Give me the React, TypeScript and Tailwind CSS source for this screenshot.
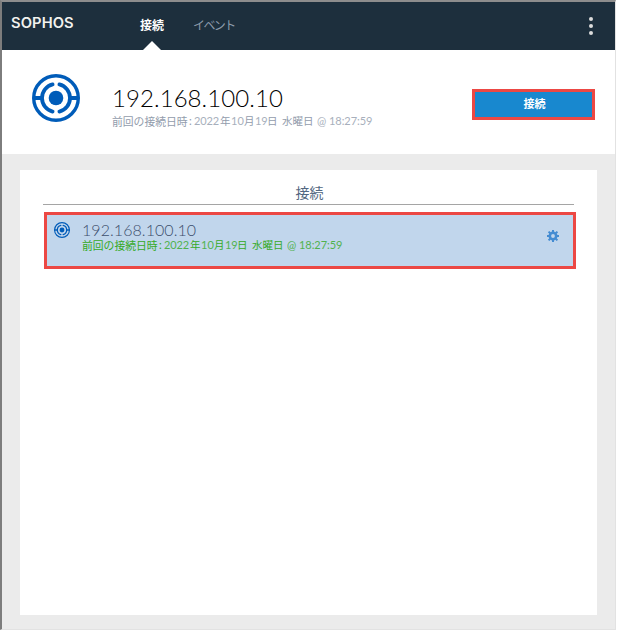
import React from "react";

const jp = "font-['Noto_Sans_CJK_JP',sans-serif]";
const latin = "font-['Lato',sans-serif]";

function TargetIcon({ className }: { className: string }) {
  return (
    <svg viewBox="0 0 48 48" className={className} fill="none" stroke="#005cb9">
      <circle cx="24" cy="24" r="22.3" strokeWidth="3.4" />
      <circle cx="24" cy="24" r="7.3" fill="#005cb9" stroke="none" />
      <path d="M1 24h9M38 24h9" strokeWidth="3.8" />
      <path
        d="M20.6 10.4A14 14 0 0 0 10 24a14 14 0 0 0 10.6 13.6M27.4 10.4A14 14 0 0 1 38 24a14 14 0 0 1-10.6 13.6"
        strokeWidth="3.8"
        strokeLinecap="round"
      />
    </svg>
  );
}

function GearIcon() {
  return (
    <svg viewBox="0 0 12 12" className="h-3 w-3" fill="none" stroke="#448cd2">
      <circle cx="6" cy="6" r="3.2" strokeWidth="2.6" />
      <path d="M6 0v2M6 10v2M0 6h2M10 6h2M1.6 1.6l1.6 1.6M8.8 8.8l1.6 1.6M1.6 10.4l1.6-1.6M8.8 3.2l1.6-1.6" strokeWidth="2" />
    </svg>
  );
}

function LastConnected() {
  return (
    <div className={`flex h-3 items-center text-[11px] leading-3 whitespace-nowrap ${latin}`}>
      <span className={`w-[77px] text-[10.8px] ${jp}`}>前回の接続日時</span>
      <span className="w-[5px]">:</span>
      <span className="w-[26px] tracking-[-0.1px] opacity-80">2022</span>
      <span className={`w-[11px] text-[10.5px] ${jp}`}>年</span>
      <span className="w-[13px] opacity-80">10</span>
      <span className={`w-[11px] text-[10.5px] ${jp}`}>月</span>
      <span className="w-3 tracking-[-0.2px] opacity-80">19</span>
      <span className={`w-[15px] text-[10.5px] ${jp}`}>日</span>
      <span className={`w-[35px] text-[10.5px] ${jp}`}>水曜日</span>
      <span className="w-3 opacity-80">@</span>
      <span className="tracking-[-0.05px] opacity-80">18:27:59</span>
    </div>
  );
}

export default function App() {
  return (
    <div className="h-[631px] w-[617px] bg-white pr-px pb-px">
      <div className="flex h-[630px] flex-col border-t-2 border-r border-b border-l-2 border-t-[#8d8d8d] border-r-[#e2e2e2] border-b-[#e2e2e2] border-l-[#7d7d7d] bg-[#ebebeb]">
        <header className="flex h-12 shrink-0 bg-[#1d2f3d]">
          <div className="w-[135px] pt-[13px] pl-[9px]">
            <span className="block w-fit origin-left scale-x-[1.05] font-['Inter',sans-serif] text-[14px] leading-4 font-semibold tracking-[0.1px] text-[#f2f2ee]">SOPHOS</span>
          </div>
          <nav className={`flex flex-1 text-[12px] leading-4 ${jp}`}>
            <div className="flex w-[30px] flex-col items-center justify-between pt-[15px]">
              <span className="font-bold text-white">接続</span>
              <span className="h-0 w-0 border-x-[9px] border-b-[9px] border-x-transparent border-b-white" />
            </div>
            <span className="pt-[15px] pl-[26px] tracking-[-1.6px] text-[#8d9bac]">イベント</span>
          </nav>
          <div className="flex w-[48px] flex-col items-center gap-[3px] pt-[15px]">
            <span className="h-1 w-1 rounded-full bg-[#dcdcdc]" />
            <span className="h-1 w-1 rounded-full bg-[#dcdcdc]" />
            <span className="h-1 w-1 rounded-full bg-[#dcdcdc]" />
          </div>
        </header>

        <section className="flex h-[104px] shrink-0 bg-white">
          <div className="w-[110px] pt-6 pl-[30px]">
            <TargetIcon className="h-12 w-12" />
          </div>
          <div className="flex-1 pt-[34px]">
            <div className={`h-[31px] text-[24px] leading-[28px] font-light tracking-[0.07px] text-black ${latin}`}>192.168.100.10</div>
            <div className="text-[#929cac]">
              <LastConnected />
            </div>
          </div>
          <div className="pt-[39px] pr-5">
            <button className={`block h-[31px] w-[123px] border-3 border-[#ec4844] bg-[#1888cf] pb-[3px] pl-[2px] text-[11px] leading-[22px] font-bold text-white ${jp}`}>接続</button>
          </div>
        </section>

        <main className="mx-[18px] mt-4 h-[445px] bg-white px-[23px] pt-3">
          <h1 className={`h-[23px] border-b border-[#a5a5a5] pl-[2px] text-center text-[14px] leading-[21px] text-[#526781] ${jp}`}>接続</h1>
          <div className="mt-[7px] mr-[-2px] ml-px flex h-[57px] border-3 border-[#ec4844] bg-[#c1d6ec]">
            <div className="w-[35px] pt-[7px] pl-[7px]">
              <TargetIcon className="h-4 w-4" />
            </div>
            <div className="flex-1 pt-[6px]">
              <div className={`h-[18px] text-[16px] leading-[17px] font-light tracking-[0.06px] text-[#3d4f6c] ${latin}`}>192.168.100.10</div>
              <div className="text-[#35aa27]">
                <LastConnected />
              </div>
            </div>
            <div className="pt-[15px] pr-[14px]">
              <GearIcon />
            </div>
          </div>
        </main>
      </div>
    </div>
  );
}
